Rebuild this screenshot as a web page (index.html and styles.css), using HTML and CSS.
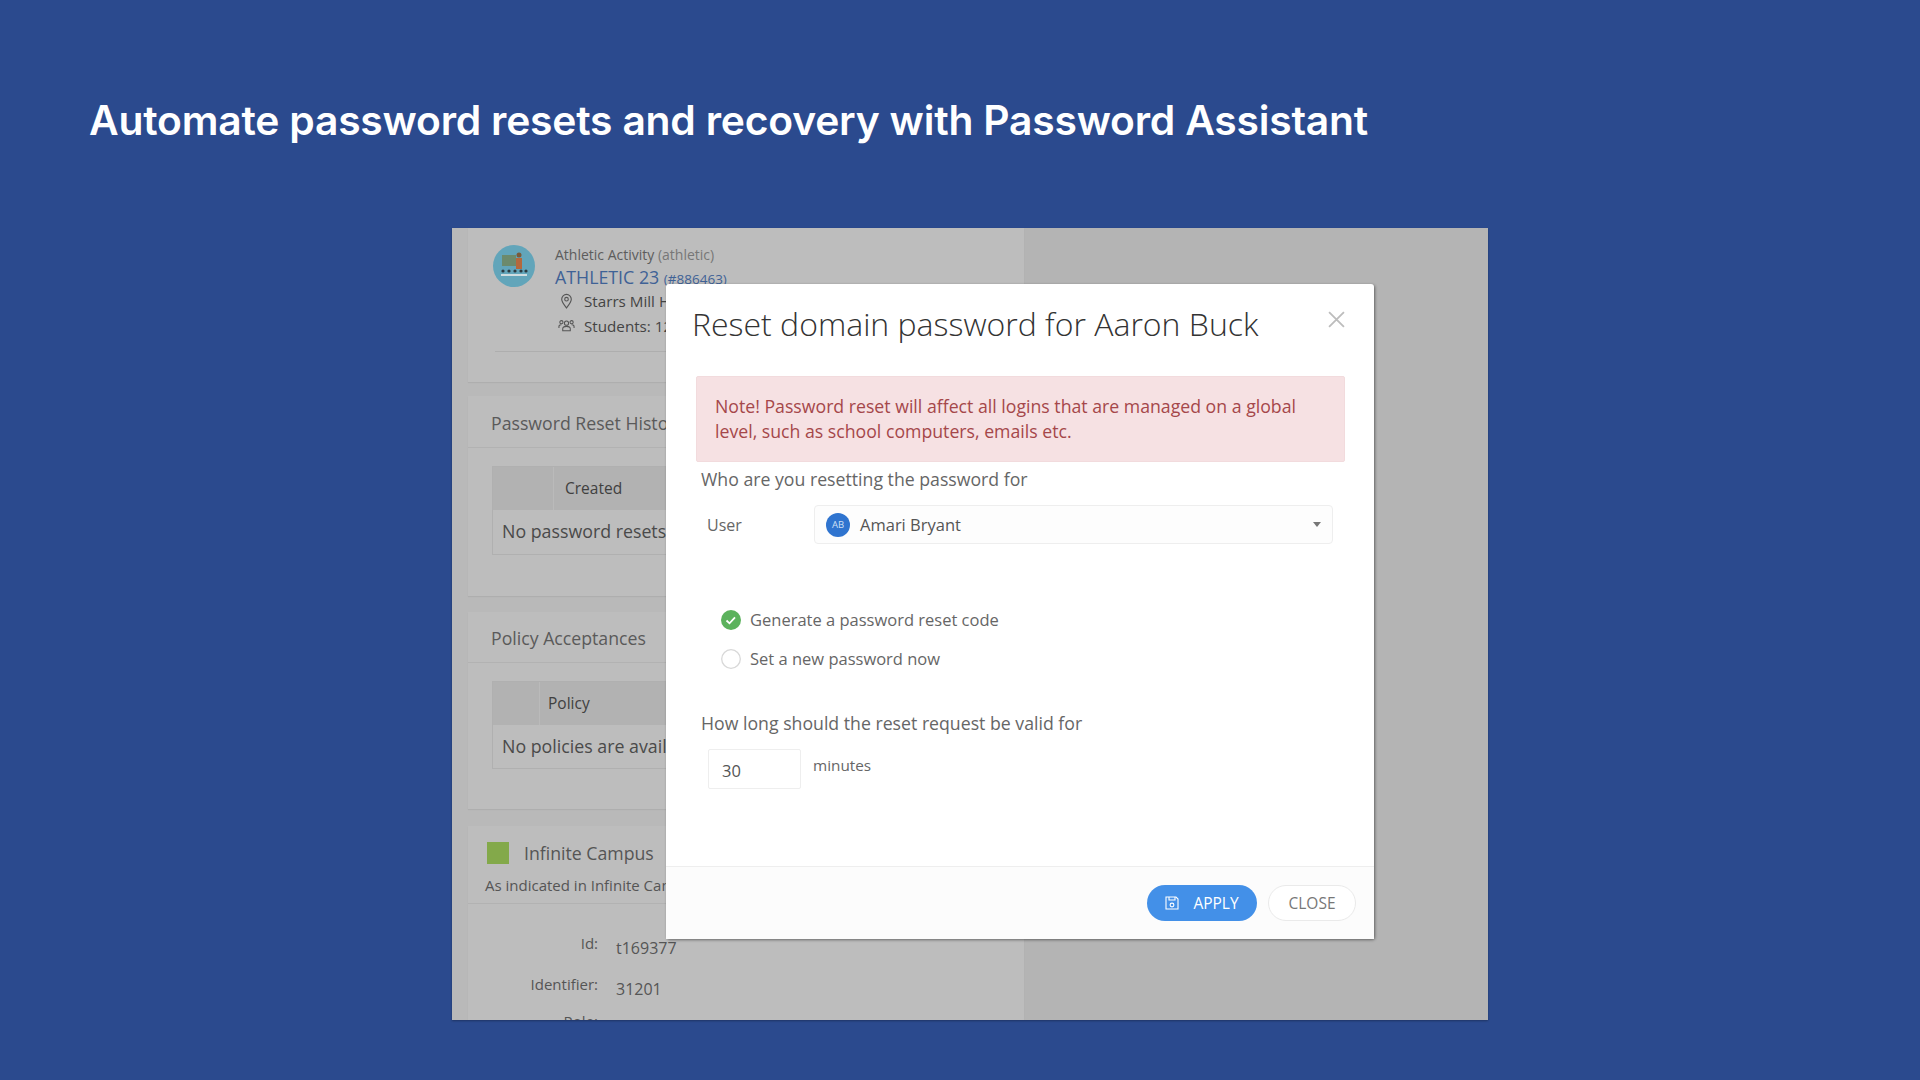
FILE: index.html
```html
<!DOCTYPE html>
<html lang="en">
<head>
  <meta charset="UTF-8" />
  <title>Password Assistant</title>
  <link rel="stylesheet" href="styles.css">
</head>
<body>
  <h1 class="slide-title">Automate password resets and recovery with Password Assistant</h1>

  <div class="shot">
    <div class="side">
      <!-- user card -->
      <section class="card card-user">
        <svg class="user-pic" viewBox="0 0 42 42">
          <circle cx="21" cy="21" r="21" fill="#62a5ba"/>
          <rect x="9" y="10" width="14" height="11" fill="#6c8a6c"/>
          <circle cx="26" cy="10" r="2.5" fill="#7a5a3a"/>
          <rect x="23" y="13" width="6" height="11" fill="#b4683c"/>
          <g fill="#2b3a40"><circle cx="10" cy="26" r="1.6"/><circle cx="16" cy="26" r="1.6"/><circle cx="22" cy="26" r="1.6"/><circle cx="28" cy="26" r="1.6"/><circle cx="33" cy="26" r="1.6"/></g>
          <rect x="8" y="29" width="26" height="2" fill="#cfdde0"/>
        </svg>
        <div class="user-info">
          <div class="user-type">Athletic Activity <span class="muted">(athletic)</span></div>
          <div class="user-name">ATHLETIC 23 <small>(#886463)</small></div>
          <div class="user-line user-line-first">
            <svg class="line-icon" viewBox="0 0 16 16" fill="none" stroke="#555" stroke-width="1.1"><path d="M8 15C5 11 3.2 8.8 3.2 6.2a4.8 4.8 0 0 1 9.6 0C12.8 8.8 11 11 8 15z"/><circle cx="8" cy="6.2" r="1.8"/></svg>
            Starrs Mill High School
          </div>
          <div class="user-line">
            <svg class="line-icon" viewBox="0 0 18 16" fill="none" stroke="#555" stroke-width="1.1"><circle cx="9" cy="5" r="2.2"/><circle cx="3.6" cy="4" r="1.7"/><circle cx="14.4" cy="4" r="1.7"/><path d="M5 13v-2c0-1.6 1.6-2.6 4-2.6s4 1 4 2.6v2zM1 10V8.400c0-1 1-1.700 2.600-1.700M17 10V8.400c0-1-1-1.700-2.600-1.700"/></svg>
            Students: 12
          </div>
        </div>
      </section>

      <section class="card card-reset">
        <h3 class="card-head">Password Reset History</h3>
        <div class="tbl">
          <div class="tbl-head"><span class="tbl-first tbl-first-wide"></span><span class="tbl-col">Created</span></div>
          <div class="tbl-row">No password resets are available</div>
        </div>
      </section>

      <section class="card card-policy">
        <h3 class="card-head">Policy Acceptances</h3>
        <div class="tbl">
          <div class="tbl-head"><span class="tbl-first"></span><span class="tbl-col">Policy</span></div>
          <div class="tbl-row">No policies are available</div>
        </div>
      </section>

      <section class="card card-campus">
        <div class="campus-head"><span class="campus-logo"></span>Infinite Campus</div>
        <div class="campus-sub">As indicated in Infinite Campus</div>
        <dl class="campus-data">
          <dt>Id:</dt><dd>t169377</dd>
          <dt>Identifier:</dt><dd>31201</dd>
          <dt class="campus-role">Role:</dt><dd class="campus-role">Student</dd>
        </dl>
      </section>
    </div>

    <div class="modal">
      <div class="modal-body">
        <div class="modal-top">
          <h2 class="modal-title">Reset domain password for Aaron Buck</h2>
          <svg class="modal-x" viewBox="0 0 16 16" stroke="#bdbdbd" stroke-width="1.700"><path d="M1 1l14 14M15 1L1 15"/></svg>
        </div>
        <div class="alert">Note! Password reset will affect all logins that are managed on a global level, such as school computers, emails etc.</div>
        <p class="q q-who">Who are you resetting the password for</p>
        <div class="user-row">
          <label class="user-label">User</label>
          <div class="select">
            <span class="initials">AB</span>
            <span class="select-name">Amari Bryant</span>
            <span class="caret"></span>
          </div>
        </div>
        <div class="radios">
          <div class="radio">
            <svg class="radio-mark" viewBox="0 0 20 20"><circle cx="10" cy="10" r="10" fill="#5cb25d"/><path d="M5.500 10.500l3 2.800 5.500-6" fill="none" stroke="#fff" stroke-width="1.800"/></svg>
            Generate a password reset code
          </div>
          <div class="radio">
            <svg class="radio-mark" viewBox="0 0 20 20"><circle cx="10" cy="10" r="9.300" fill="#fff" stroke="#d8d8d8" stroke-width="1.300"/></svg>
            Set a new password now
          </div>
        </div>
        <p class="q q-long">How long should the reset request be valid for</p>
        <div class="minutes-row">
          <div class="minutes-input">30</div>
          <span class="minutes-label">minutes</span>
        </div>
      </div>
      <div class="modal-foot">
        <button class="btn btn-apply">
          <svg class="btn-icon" viewBox="0 0 14 14" fill="none" stroke="#fff" stroke-width="1.100"><path d="M1 1h10l2 2v10H1z"/><path d="M4 1v3h6V1"/><circle cx="7" cy="9" r="1.900"/></svg>
          APPLY
        </button>
        <button class="btn btn-close">CLOSE</button>
      </div>
    </div>
  </div>
</body>
</html>
```

FILE: styles.css
```css
* { margin: 0; padding: 0; box-sizing: border-box; }
html, body { height: 100%; }
body {
  background: #2b4a8e;
  font-family: "Open Sans", sans-serif;
  overflow: hidden;
}
.slide-title {
  padding: 94px 0 0 89px;
  height: 228px;
  font-family: Inter, sans-serif;
  font-weight: 600;
  font-size: 40.8px;
  line-height: 52px;
  letter-spacing: -0.2px;
  color: #fff;
}
.shot {
  position: relative;
  width: 1036px;
  height: 792px;
  margin-left: 452px;
  background: #b4b4b4;
  overflow: hidden;
  box-shadow: 0 1px 2px rgba(0, 0, 0, 0.3);
}
.side {
  width: 572px;
  height: 100%;
  padding-left: 16px;
  background: #b9b9b9;
  color: #555;
}
.card {
  background: #bdbdbd;
  margin-bottom: 14px;
  box-shadow: 0 1px 1px rgba(0, 0, 0, 0.06);
}
.card-user {
  display: flex;
  height: 154px;
  padding: 17px 0 0 25px;
  position: relative;
}
.card-user::after {
  content: "";
  position: absolute;
  left: 27px;
  right: 20px;
  bottom: 30px;
  border-top: 1px solid #aeaeae;
}
.user-pic { width: 42px; height: 42px; flex: none; margin-right: 20px; }
.user-type { font-size: 14px; line-height: 20px; color: #5c5c5c; }
.muted { color: #777; }
.user-name { font-size: 17.8px; line-height: 25px; color: #3f6296; }
.user-name small { font-size: 13.5px; }
.user-line {
  display: flex;
  align-items: center;
  font-size: 15.2px;
  line-height: 24.500px;
  color: #444;
  white-space: nowrap;
}
.user-line-first { margin-top: -3px; }
.line-icon { width: 17px; height: 16px; margin: 0 9px 0 3px; }
.card-reset { height: 200px; margin-bottom: 16px; padding: 14px 0 0; }
.card-policy { height: 197px; margin-bottom: 17px; padding: 13px 0 0; }
.card-head {
  font-weight: 400;
  font-size: 17.700px;
  line-height: 26px;
  padding: 0 0 11px 23px;
  border-bottom: 1px solid #b2b2b2;
  color: #5a5a5a;
  margin-bottom: 18px;
}
.tbl {
  margin-left: 24px;
  border: 1px solid #b0b0b0;
  color: #4a4a4a;
}
.tbl-head { display: flex; height: 43px; background: #b2b2b2; font-size: 15.500px; }
.tbl-first { width: 47px; border-right: 1px solid #bababa; }
.tbl-first-wide { width: 61px; }
.tbl-col { line-height: 43px; padding-left: 8px; font-weight: 500; color: #404040; }
.card-reset .tbl-col { padding-left: 11px; }
.tbl-row { height: 43px; line-height: 42px; padding-left: 9px; font-size: 17.800px; white-space: nowrap; }
.card-reset .tbl-row { height: 44px; }
.card-campus { padding: 0; height: 200px; }
.campus-head {
  display: flex;
  align-items: center;
  height: 51px;
  padding: 3px 0 0 19px;
  font-size: 17.700px;
  color: #555;
}
.campus-logo { width: 22px; height: 22px; background: #83a94a; margin-right: 15px; }
.campus-sub {
  margin-top: -4px;
  padding: 0 0 6px 17px;
  font-size: 15px;
  line-height: 24px;
  border-bottom: 1px solid #b2b2b2;
}
.campus-data {
  display: grid;
  grid-template-columns: 130px auto;
  column-gap: 18px;
  row-gap: 12px;
  padding-top: 27px;
  font-size: 15px;
  line-height: 24px;
}
.campus-data dt { text-align: right; }
.campus-data dd { padding-top: 5px; font-size: 16px; }
.campus-data .campus-role { margin-top: -4px; }

.modal {
  position: absolute;
  left: 214px;
  top: 56px;
  width: 708px;
  height: 655px;
  background: #fff;
  border-radius: 3px;
  box-shadow: 1px 1px 3px rgba(0, 0, 0, 0.45);
  display: flex;
  flex-direction: column;
}
.modal-body { flex: 1; padding: 0 30px 0 26px; color: #666; }
.modal-top { display: flex; justify-content: space-between; height: 92px; padding: 16px 0 0; }
.modal-title { font-weight: 300; font-size: 32px; line-height: 48px; color: #333; white-space: nowrap; }
.modal-x { width: 17px; height: 17px; margin: 11px -1px 0 0; }
.alert {
  margin: 0 -1px 0 4px;
  padding: 17px 18px 0;
  height: 86px;
  background: #f6e1e3;
  border: 1px solid #f2dbdd;
  border-radius: 2px;
  color: #a5474a;
  font-size: 17.700px;
  line-height: 24.500px;
}
.q { font-size: 17.700px; line-height: 24px; margin-left: 9px; color: #666; }
.q-who { margin-top: 5px; }
.user-row { display: flex; align-items: center; margin: 14px 11px 0 15px; }
.user-label { width: 107px; font-size: 16px; color: #666; }
.select {
  flex: 1;
  display: flex;
  align-items: center;
  height: 39px;
  padding: 0 11px;
  border: 1px solid #eee;
  border-radius: 4px;
  background: #fdfdfd;
}
.initials {
  width: 24px;
  height: 24px;
  border-radius: 50%;
  background: #2f74cf;
  color: #cfe0f5;
  font-size: 9.500px;
  line-height: 24px;
  text-align: center;
  margin-right: 10px;
}
.select-name { flex: 1; font-size: 16.500px; color: #555; }
.caret {
  border-left: 4px solid transparent;
  border-right: 4px solid transparent;
  border-top: 5px solid #777;
}
.radios { margin: 56px 0 0 29px; }
.radio { display: flex; align-items: center; height: 39px; font-size: 16.500px; color: #666; }
.radio-mark { width: 20px; height: 20px; margin-right: 9px; }
.q-long { margin-top: 33px; }
.minutes-row { display: flex; align-items: flex-start; margin: 14px 0 0 16px; }
.minutes-input {
  width: 93px;
  height: 40px;
  padding-left: 13px;
  line-height: 41px;
  font-size: 16.500px;
  color: #555;
  border: 1px solid #eee;
  border-radius: 2px;
}
.minutes-label { margin: 5px 0 0 12px; font-size: 15.300px; line-height: 22px; }
.modal-foot {
  display: flex;
  justify-content: flex-end;
  align-items: center;
  gap: 11px;
  height: 73px;
  padding: 0 18px 1px 0;
  background: #fcfcfc;
  border-top: 1px solid #eee;
}
.btn {
  height: 36px;
  border-radius: 18px;
  font-family: "Open Sans", sans-serif;
  font-size: 15.500px;
}
.btn-apply {
  width: 110px;
  display: flex;
  align-items: center;
  justify-content: center;
  background: #4390e8;
  border: 0;
  color: #fff;
}
.btn-icon { width: 14px; height: 14px; margin-right: 14px; }
.btn-close {
  width: 88px;
  background: #fff;
  border: 1px solid #eaeaea;
  color: #777;
}
```
